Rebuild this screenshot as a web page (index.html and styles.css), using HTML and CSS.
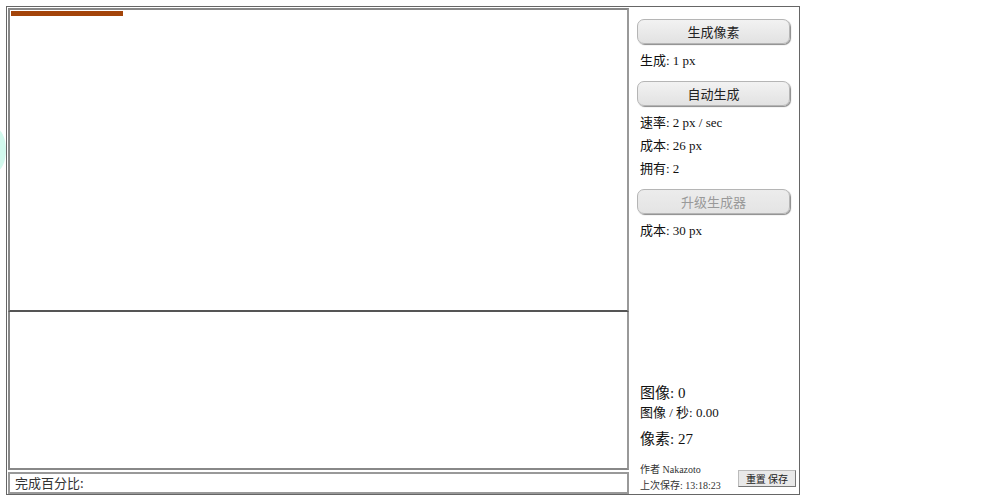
FILE: index.html
```html
<!DOCTYPE html>
<html lang="zh">
<head>
<meta charset="utf-8">
<title>像素</title>
<link rel="stylesheet" href="styles.css">
</head>
<body>
<div class="blob"></div>
<div class="app">
  <div class="left">
    <div class="canvas-top">
      <div class="bar"></div>
    </div>
    <div class="canvas-bottom"></div>
    <div class="progress">完成百分比:</div>
  </div>
  <div class="side">
    <div class="controls">
      <button class="btn">生成像素</button>
      <div class="line">生成: 1 px</div>
      <button class="btn">自动生成</button>
      <div class="line">速率: 2 px / sec</div>
      <div class="line">成本: 26 px</div>
      <div class="line">拥有: 2</div>
      <button class="btn disabled">升级生成器</button>
      <div class="line">成本: 30 px</div>
    </div>
    <div class="stats">
      <div class="big">图像: 0</div>
      <div class="mid">图像 / 秒: 0.00</div>
      <div class="big big2">像素: 27</div>
    </div>
    <div class="footer">
      <div class="credits">
        <div>作者 Nakazoto</div>
        <div>上次保存: 13:18:23</div>
      </div>
      <button class="small">重置 保存</button>
    </div>
  </div>
</div>
</body>
</html>
```

FILE: styles.css
```css
html, body {
  margin: 0;
  padding: 0;
  background: #fff;
}
body {
  position: relative;
  width: 1000px;
  height: 501px;
  overflow: hidden;
  font-family: "Liberation Serif", "Noto Sans CJK SC", serif;
  color: #111;
}
.blob {
  position: absolute;
  left: -16px;
  top: 128px;
  width: 22px;
  height: 44px;
  border-radius: 50%;
  background: rgba(180, 245, 225, 0.6);
}
.app {
  margin: 6px 0 0 6px;
  width: 794px;
  height: 489px;
  box-sizing: border-box;
  border: 1px solid #666;
  display: flex;
}
.left {
  width: 622px;
  padding: 1px 0 0 1px;
  box-sizing: border-box;
  display: flex;
  flex-direction: column;
}
.canvas-top {
  height: 304px;
  box-sizing: border-box;
  border: 2px solid #777;
  border-color: #888 #999 #555 #888;
  padding: 1px 0 0 1px;
}
.bar {
  width: 112px;
  height: 5px;
  background: #a3440a;
}
.canvas-bottom {
  height: 158px;
  box-sizing: border-box;
  border: 2px solid #888;
  border-top: none;
  border-color: #888 #999 #888 #888;
}
.progress {
  margin-top: 2px;
  height: 22px;
  box-sizing: border-box;
  border: 2px solid #999;
  padding-left: 5px;
  font-family: "Noto Sans CJK SC", "Noto Sans", sans-serif;
  font-size: 13px;
  line-height: 18px;
  color: #333;
}
.side {
  flex: 1;
  display: flex;
  flex-direction: column;
  padding: 12px 3px 0 8px;
}
.controls {
  display: flex;
  flex-direction: column;
  flex: 1;
}
.btn {
  width: 153px;
  height: 25px;
  margin: 0 0 5px 0;
  padding: 0;
  border: 1px solid #b5b5b5;
  border-radius: 7px;
  background: linear-gradient(#f2f2f2, #e2e2e2);
  box-shadow: 1px 1px 1px #8a8a8a;
  font-family: "Noto Sans CJK SC", "Noto Sans", sans-serif;
  font-size: 13px;
  color: #222;
}
.btn.disabled {
  color: #999;
  background: linear-gradient(#ececec, #e4e4e4);
}
.line {
  padding-left: 3px;
  font-size: 13px;
  line-height: 23px;
  margin-bottom: 9px;
}
.line + .line {
  margin-top: -9px;
}
.stats {
  padding-left: 3px;
}
.big {
  font-size: 15px;
  line-height: 20px;
}
.mid {
  font-size: 13px;
  line-height: 20px;
}
.big2 {
  margin-top: 6px;
}
.footer {
  margin-top: 13px;
  display: flex;
  justify-content: space-between;
  align-items: flex-start;
  padding-left: 3px;
}
.credits {
  font-size: 10px;
  line-height: 16px;
  color: #333;
}
.small {
  margin-top: 8px;
  height: 17px;
  width: 58px;
  padding: 0;
  border: 1px solid #bbb;
  border-right-color: #777;
  border-bottom-color: #777;
  border-radius: 0;
  background: #e9e9e9;
  font-family: "Noto Sans CJK SC", "Noto Sans", sans-serif;
  font-size: 10px;
  color: #222;
}
```
